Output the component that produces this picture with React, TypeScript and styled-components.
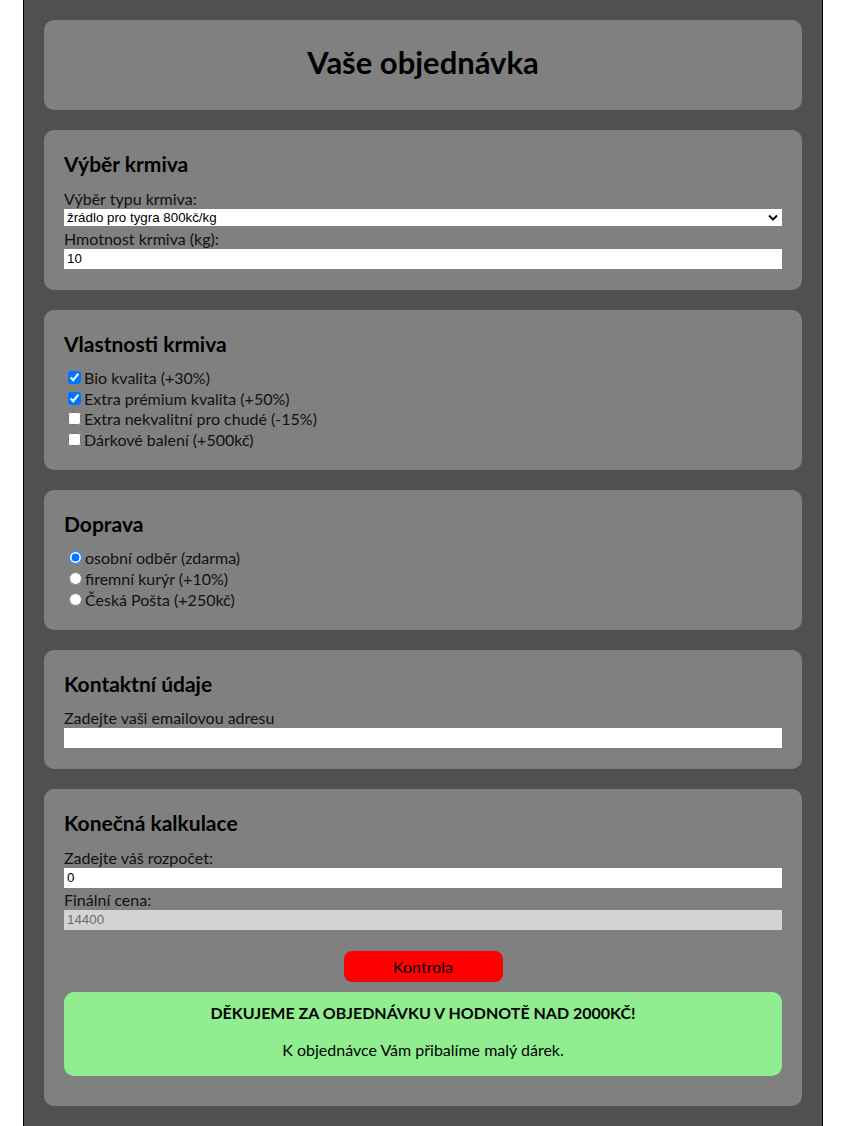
import React from "react";
import styled, { createGlobalStyle } from "styled-components";

const Global = createGlobalStyle`
  html, body { margin: 0; padding: 0; background: #ffffff; }
  body { font-family: "Lato", "Noto Sans", sans-serif; color: #000; }
  * { box-sizing: border-box; }
`;

const Page = styled.div`
  width: 800px;
  margin: 0 0 0 23px;
  background: #505050;
  border: 1px solid #000;
  border-top: none;
  padding: 20px 20px 20px;
  display: flex;
  flex-direction: column;
  gap: 20px;
`;

const HeaderCard = styled.header`
  background: #808080;
  border-radius: 10px;
  height: 90px;
  display: flex;
  align-items: center;
  justify-content: center;
`;

const Title = styled.h1`
  margin: 0;
  font-size: 31px;
  font-weight: 700;
  line-height: 36px;
  padding-bottom: 6px;
`;

const Card = styled.section<{ $bottom?: number }>`
  background: #808080;
  border-radius: 10px;
  padding: 20px 20px ${(p) => p.$bottom ?? 20}px;
  display: flex;
  flex-direction: column;
`;

const CardTitle = styled.h3`
  margin: 0 0 9.5px;
  font-size: 21px;
  font-weight: 700;
  line-height: 28px;
`;

const Label = styled.label`
  display: block;
  font-size: 16px;
  line-height: 21px;
  color: #111;
`;

const SelectWrap = styled.div`
  position: relative;
  height: 17px;
  margin-bottom: 2px;
`;

const Select = styled.select`
  display: block;
  appearance: none;
  width: 100%;
  height: 17px;
  border: none;
  border-radius: 0;
  background: #fff;
  font-family: "Liberation Sans", Arial, sans-serif;
  font-size: 13.33px;
  line-height: 17px;
  padding: 0 0 0 3px;
  margin: 0;
  color: #000;
  outline: none;
`;

const Chevron = styled.svg`
  position: absolute;
  right: 4px;
  top: 4px;
  width: 10px;
  height: 9px;
  pointer-events: none;
`;

const TextInput = styled.input<{ $disabledLook?: boolean }>`
  display: block;
  width: 100%;
  height: 20px;
  border: none;
  border-radius: 0;
  background: ${(p) => (p.$disabledLook ? "#d3d3d3" : "#ffffff")};
  color: ${(p) => (p.$disabledLook ? "#6d6d6d" : "#000")};
  font-family: "Liberation Sans", Arial, sans-serif;
  font-size: 13.33px;
  padding: 1px 3px;
  outline: none;
  margin: 0 0 1px;
`;

const OptionRow = styled.label`
  display: flex;
  align-items: center;
  height: 20.75px;
  font-size: 16px;
  color: #111;
`;

const Check = styled.input`
  width: 13px;
  height: 13px;
  margin: 0 3px 0 4px;
  accent-color: #0075ff;
`;

const Radio = styled.input`
  width: 13px;
  height: 13px;
  margin: 0 3px 0 5px;
  accent-color: #0075ff;
`;

const ButtonRow = styled.div`
  display: flex;
  justify-content: center;
  margin-top: 20px;
`;

const CheckButton = styled.button`
  width: 159px;
  height: 31px;
  border: none;
  border-radius: 8px;
  background: #ff0000;
  color: #000;
  font-family: "Lato", "Noto Sans", sans-serif;
  font-size: 16px;
  cursor: pointer;
`;

const ThanksBox = styled.div`
  margin-top: 10px;
  background: #90ee90;
  border-radius: 10px;
  padding: 10px 20px 15px;
  text-align: center;
`;

const ThanksTitle = styled.h4`
  margin: 0;
  font-size: 16px;
  font-weight: 700;
  line-height: 22px;
  text-transform: uppercase;
`;

const ThanksText = styled.p`
  margin: 15px 0 0;
  font-size: 16px;
  line-height: 22px;
`;

export default function App() {
  return (
    <>
      <Global />
      <Page>
        <HeaderCard>
          <Title>Vaše objednávka</Title>
        </HeaderCard>

        <Card>
          <CardTitle>Výběr krmiva</CardTitle>
          <Label htmlFor="typ">Výběr typu krmiva:</Label>
          <SelectWrap>
            <Select id="typ" defaultValue="tygr">
              <option value="tygr">žrádlo pro tygra 800kč/kg</option>
              <option value="lev">žrádlo pro lva 700kč/kg</option>
            </Select>
            <Chevron viewBox="0 0 10 9">
              <path d="M1 2.5 L5 6.5 L9 2.5" fill="none" stroke="#111" strokeWidth="2" />
            </Chevron>
          </SelectWrap>
          <Label htmlFor="hm">Hmotnost krmiva (kg):</Label>
          <TextInput id="hm" type="text" defaultValue="10" />
        </Card>

        <Card>
          <CardTitle>Vlastnosti krmiva</CardTitle>
          <OptionRow>
            <Check type="checkbox" defaultChecked />
            Bio kvalita (+30%)
          </OptionRow>
          <OptionRow>
            <Check type="checkbox" defaultChecked />
            Extra prémium kvalita (+50%)
          </OptionRow>
          <OptionRow>
            <Check type="checkbox" />
            Extra nekvalitní pro chudé (-15%)
          </OptionRow>
          <OptionRow>
            <Check type="checkbox" />
            Dárkové balení (+500kč)
          </OptionRow>
        </Card>

        <Card>
          <CardTitle>Doprava</CardTitle>
          <OptionRow>
            <Radio type="radio" name="doprava" defaultChecked />
            osobní odběr (zdarma)
          </OptionRow>
          <OptionRow>
            <Radio type="radio" name="doprava" />
            firemní kurýr (+10%)
          </OptionRow>
          <OptionRow>
            <Radio type="radio" name="doprava" />
            Česká Pošta (+250kč)
          </OptionRow>
        </Card>

        <Card>
          <CardTitle>Kontaktní údaje</CardTitle>
          <Label htmlFor="email">Zadejte vaši emailovou adresu</Label>
          <TextInput id="email" type="email" />
        </Card>

        <Card $bottom={30}>
          <CardTitle>Konečná kalkulace</CardTitle>
          <Label htmlFor="rozpocet">Zadejte váš rozpočet:</Label>
          <TextInput id="rozpocet" type="text" defaultValue="0" />
          <Label htmlFor="cena">Finální cena:</Label>
          <TextInput id="cena" type="text" defaultValue="14400" readOnly $disabledLook />
          <ButtonRow>
            <CheckButton type="button">Kontrola</CheckButton>
          </ButtonRow>
          <ThanksBox>
            <ThanksTitle>Děkujeme za objednávku v hodnotě nad 2000kč!</ThanksTitle>
            <ThanksText>K objednávce Vám přibalíme malý dárek.</ThanksText>
          </ThanksBox>
        </Card>
      </Page>
    </>
  );
}
